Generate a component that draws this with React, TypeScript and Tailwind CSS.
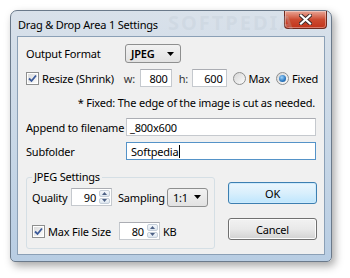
import React from 'react';

const font = "font-['Noto_Sans','Liberation_Sans',sans-serif]";

function Checkbox({ checked }: { checked: boolean }) {
  return (
    <span className="w-[13px] h-[13px] shrink-0 border border-[#8e8f8f] bg-white p-[1px]">
      <span className="w-full h-full flex items-center justify-center bg-gradient-to-br from-[#dcdcdc] to-[#fbfbfb]">
        {checked && (
          <svg width="9" height="9" viewBox="0 0 9 9">
            <path d="M1 4.5 L3.5 7 L8 1.5" fill="none" stroke="#3b5a9a" strokeWidth="1.8" />
          </svg>
        )}
      </span>
    </span>
  );
}

function Radio({ checked }: { checked: boolean }) {
  return (
    <span className="w-[13px] h-[13px] shrink-0 rounded-full border border-[#8e8f8f] bg-gradient-to-br from-[#d6d6d6] to-[#fcfcfc] flex items-center justify-center">
      {checked && (
        <span className="w-[7px] h-[7px] rounded-full bg-[radial-gradient(circle_at_40%_35%,#9fd4fb,#2a77c0_60%,#1c4f8c)]" />
      )}
    </span>
  );
}

function Spinner() {
  return (
    <div className="w-[12px] h-full flex flex-col gap-[1px] py-[1px] pr-[1px]">
      <div className="flex-1 rounded-[2px] border border-[#c4ced9] bg-gradient-to-b from-[#f3f7fb] to-[#dde6ef] flex items-center justify-center">
        <svg width="5" height="3" viewBox="0 0 5 3"><path d="M0 3 L2.5 0 L5 3Z" fill="#4d6185" /></svg>
      </div>
      <div className="flex-1 rounded-[2px] border border-[#c4ced9] bg-gradient-to-b from-[#f3f7fb] to-[#dde6ef] flex items-center justify-center">
        <svg width="5" height="3" viewBox="0 0 5 3"><path d="M0 0 L2.5 3 L5 0Z" fill="#4d6185" /></svg>
      </div>
    </div>
  );
}

function Combo({ value, width, bold = false }: { value: string; width: string; bold?: boolean }) {
  return (
    <div className={`${width} h-[19px] rounded-[3px] border border-[#8e8f8f] bg-gradient-to-b from-[#f2f2f2] to-[#e2e2e2] flex items-center justify-between pl-[5px] pr-[6px]`}>
      <span className={`leading-none text-black ${bold ? 'font-semibold' : ''}`}>{value}</span>
      <svg width="7" height="4" viewBox="0 0 7 4"><path d="M0 0 L7 0 L3.5 4Z" fill="#000" /></svg>
    </div>
  );
}

function TextBox({ value, className = '', align = 'left', focus = false }: { value: string; className?: string; align?: 'left' | 'right'; focus?: boolean }) {
  return (
    <div
      className={`h-[18px] bg-white border flex items-center leading-none text-black ${
        focus ? 'border-[#5593c8]' : 'border-[#c5c9ce] border-t-[#abadb3]'
      } ${align === 'right' ? 'justify-end pr-[3px]' : 'pl-[3px]'} ${className}`}
    >
      <span>{value}</span>
      {focus && <span className="w-[1px] h-[13px] bg-black ml-[1px]" />}
    </div>
  );
}

export default function App() {
  return (
    <div className={`w-[350px] h-[278px] bg-white overflow-hidden relative whitespace-nowrap ${font}`}>
      <div className="ml-[10px] mt-[10px] w-[322px] h-[252px] rounded-t-[7px] rounded-b-[5px] border border-[#6b7a8b] bg-gradient-to-b from-[#d9e1ea] via-[#c9d8e7] to-[#b8cde3] shadow-[3px_4px_9px_rgba(0,0,0,0.35)] flex flex-col relative">
        {/* title bar */}
        <div className="h-[25px] flex items-start justify-between pl-[7px] pr-[4px] shrink-0">
          <span className="text-[11px] leading-none text-black mt-[8px] tracking-[-0.2px]">Drag &amp; Drop Area 1 Settings</span>
          <div className="w-[43px] h-[18px] rounded-b-[4px] border border-[#6d2a1f] border-t-0 bg-gradient-to-b from-[#e8a697] via-[#cc4b31] to-[#c2331a] flex items-center justify-center shadow-[inset_0_0_0_1px_rgba(255,255,255,0.35)]">
            <svg width="13" height="11" viewBox="0 0 13 11">
              <path d="M2 1.5 L11 9.5 M11 1.5 L2 9.5" stroke="#3b2a2a" strokeWidth="4" strokeLinecap="square" />
              <path d="M2 1.5 L11 9.5 M11 1.5 L2 9.5" stroke="#ffffff" strokeWidth="2.2" strokeLinecap="square" />
            </svg>
          </div>
        </div>

        {/* client area */}
        <div className="mx-[6px] mb-[6px] flex-1 border border-[#8ba0b6] bg-[#f0f0f0] text-[11px] leading-none text-black tracking-[-0.2px] flex flex-col pl-[8px] pr-[6px]">
          {/* output format */}
          <div className="flex items-center mt-[7px] h-[19px]">
            <span className="w-[99px]">Output Format</span>
            <Combo value="JPEG" width="w-[56px]" bold />
          </div>

          {/* resize */}
          <div className="flex items-center mt-[6px] h-[18px]">
            <Checkbox checked />
            <span className="w-[89px] pl-[3px]">Resize (Shrink)</span>
            <span className="text-[#333]">w:</span>
            <TextBox value="800" align="right" className="w-[33px] ml-[5px]" />
            <span className="ml-[7px] text-[#333]">h:</span>
            <TextBox value="600" align="right" className="w-[36px] ml-[4px]" />
            <span className="ml-[6px]"><Radio checked={false} /></span>
            <span className="ml-[3px]">Max</span>
            <span className="ml-[6px]"><Radio checked /></span>
            <span className="ml-[3px]">Fixed</span>
          </div>

          {/* note */}
          <div className="mt-[10px] flex justify-end pr-[3px]">
            <span>* Fixed: The edge of the image is cut as needed.</span>
          </div>

          {/* append */}
          <div className="flex items-center mt-[10px]">
            <span className="w-[100px]">Append to filename</span>
            <TextBox value="_800x600" className="w-[190px]" />
          </div>

          {/* subfolder */}
          <div className="flex items-center mt-[6px]">
            <span className="w-[100px]">Subfolder</span>
            <TextBox value="Softpedia" focus className="w-[190px] pl-[4px]" />
          </div>

          {/* bottom area */}
          <div className="flex mt-[10px]">
            <div className="relative w-[189px] h-[72px] mt-[7px] border border-[#d5dfe5] rounded-[3px] pl-[5px] pt-[10px]">
              <span className="absolute -top-[7px] left-[5px] px-[2px] bg-[#f0f0f0]">JPEG Settings</span>
              <div className="flex items-center h-[18px]">
                <span className="w-[39px]">Quality</span>
                <div className="w-[41px] h-[18px] bg-white border border-[#c5c9ce] border-t-[#abadb3] flex items-center">
                  <span className="flex-1 text-right pr-[3px]">90</span>
                  <Spinner />
                </div>
                <span className="ml-[6px]">Sampling</span>
                <span className="ml-[2px]"><Combo value="1:1" width="w-[41px]" /></span>
              </div>
              <div className="flex items-center h-[18px] mt-[16px]">
                <Checkbox checked />
                <span className="ml-[3px]">Max File Size</span>
                <div className="w-[41px] h-[18px] ml-[8px] bg-white border border-[#c5c9ce] border-t-[#abadb3] flex items-center">
                  <span className="flex-1 text-right pr-[3px]">80</span>
                  <Spinner />
                </div>
                <span className="ml-[3px]">KB</span>
              </div>
            </div>

            <div className="flex flex-col ml-[13px] mt-[12px]">
              <div className="w-[89px] h-[22px] rounded-[3px] border border-[#3c7fb1] bg-gradient-to-b from-[#eaf6fd] via-[#d9effc] to-[#bee6fd] shadow-[inset_0_0_0_1px_#cdeafc] flex items-center justify-center">
                OK
              </div>
              <div className="w-[89px] h-[22px] mt-[14px] rounded-[3px] border border-[#707070] bg-gradient-to-b from-[#f2f2f2] via-[#e9e9e9] to-[#d2d2d2] shadow-[inset_0_0_0_1px_#fcfcfc] flex items-center justify-center">
                Cancel
              </div>
            </div>
          </div>
        </div>
      </div>

      {/* watermark */}
      <span className="absolute left-[168px] top-[13px] text-[20px] leading-none font-bold tracking-[2px] text-[#b8c4d0]/25 pointer-events-none">SOFTPEDIA</span>
    </div>
  );
}
